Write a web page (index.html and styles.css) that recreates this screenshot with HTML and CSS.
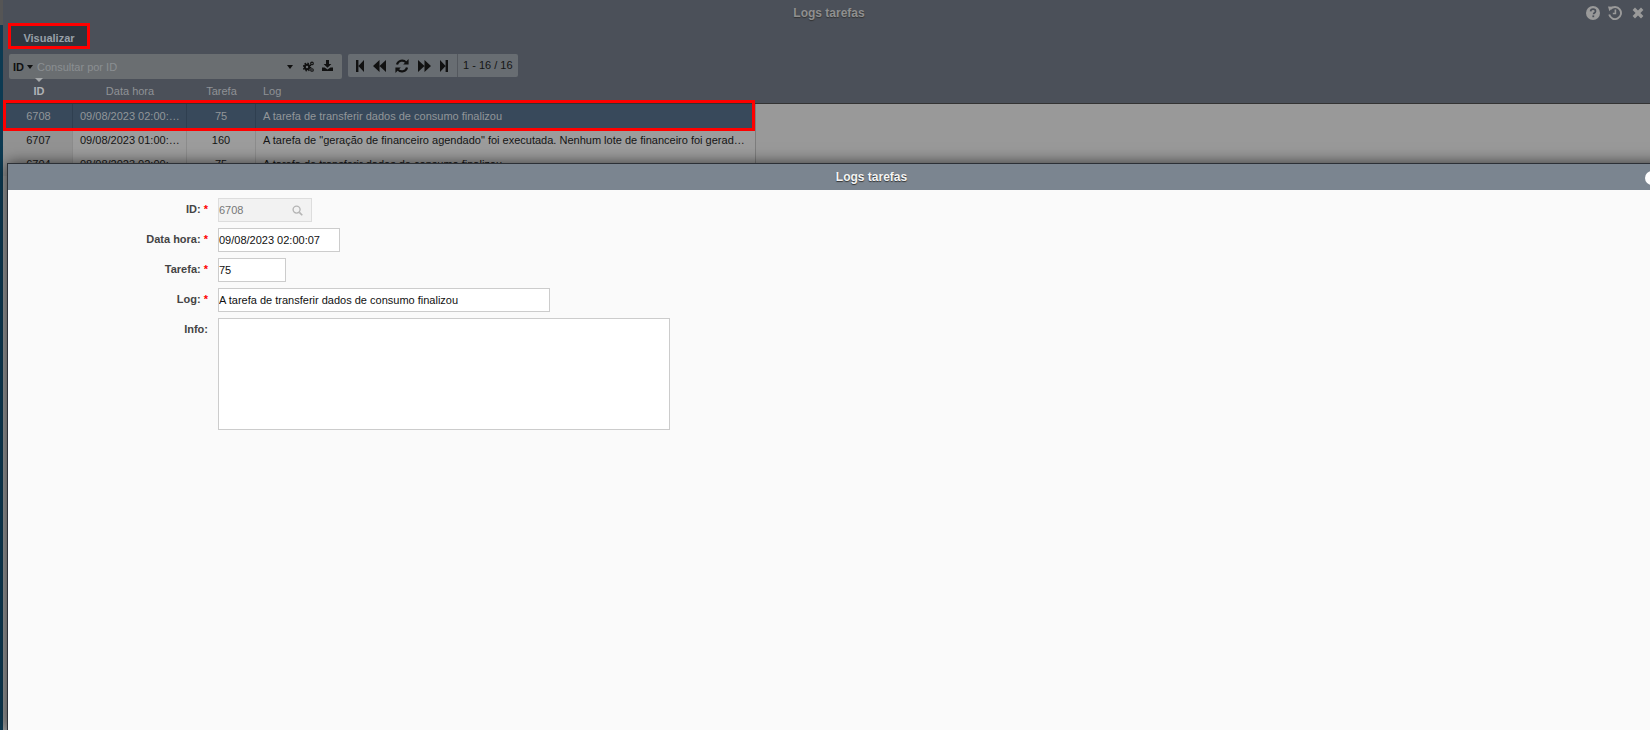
FILE: index.html
```html
<!DOCTYPE html>
<html lang="en">
<head>
<meta charset="UTF-8" />
<title>Logs tarefas</title>
<link rel="stylesheet" href="styles.css">
</head>
<body>
<div class="edge"></div>
<div class="app">
  <div class="head">
    <div class="title">Logs tarefas</div>
    <div class="win-icons">
      <svg class="win-icon" viewBox="0 0 14 14"><circle cx="7" cy="7" r="7" fill="#9a9a9a"/><path d="M4.6 5.4C4.7 3.9 5.8 3.2 7.1 3.2c1.4 0 2.4.9 2.4 2 0 1-.6 1.4-1.2 1.9-.5.3-.7.6-.7 1.2" fill="none" stroke="#4b5059" stroke-width="1.7"/><rect x="6.4" y="9.4" width="1.8" height="1.8" fill="#4b5059"/></svg>
      <svg class="win-icon" viewBox="0 0 14 14"><path d="M2.4 3.2A6 6 0 1 1 1.2 8.6" fill="none" stroke="#9a9a9a" stroke-width="1.9"/><path d="M0 .6l5 .2-3.6 4.4z" fill="#9a9a9a"/><path d="M7.4 3.6v3.9H4.8" fill="none" stroke="#9a9a9a" stroke-width="1.6"/></svg>
      <svg class="win-icon win-close" viewBox="0 0 12 12"><path d="M1.8 1.8l8.4 8.4M10.2 1.8l-8.4 8.4" stroke="#9a9a9a" stroke-width="3.4"/></svg>
    </div>
    <div class="actions"><button class="btn marked">Visualizar</button></div>
    <div class="toolbar">
      <div class="search">
        <b class="search-field">ID</b>
        <span class="caret"></span>
        <span class="search-hint">Consultar por ID</span>
        <span class="caret caret-end"></span>
        <svg class="tool-icon gears" viewBox="0 0 11 11"><circle cx="4" cy="6" r="2.2" fill="none" stroke="#111" stroke-width="2"/><circle cx="4" cy="6" r="3.7" fill="none" stroke="#111" stroke-width="1.4" stroke-dasharray="1.5 1.4"/><circle cx="9" cy="2.4" r="1.3" fill="none" stroke="#111" stroke-width="1.1"/><circle cx="9" cy="9" r="1.3" fill="none" stroke="#111" stroke-width="1.1"/></svg>
        <svg class="tool-icon save" viewBox="0 0 11 11"><path d="M4 0h3v4h2.4L5.5 7.8 1.6 4H4z" fill="#111"/><path d="M0 7.4h2.6L5.5 9.4l2.9-2H11V11H0z" fill="#111"/></svg>
      </div>
      <div class="pager">
        <div class="pager-btns">
          <svg class="step" viewBox="0 0 8 12"><path d="M0 0h2.4v12H0zM8 0v12L2.4 6z" fill="#111"/></svg>
          <svg class="fast" viewBox="0 0 13 12"><path d="M6.5 0v12L0 6zM13 0v12L6.5 6z" fill="#111"/></svg>
          <svg class="refresh" viewBox="0 0 14 14"><path d="M2 5.6A5.2 5.2 0 0 1 11 3.4M12 8.4A5.2 5.2 0 0 1 3 10.6" fill="none" stroke="#111" stroke-width="2.2"/><path d="M13.6 0v5.4H8.2zM.4 14V8.6h5.4z" fill="#111"/></svg>
          <svg class="fast" viewBox="0 0 13 12"><path d="M0 0l6.5 6L0 12zM6.5 0L13 6l-6.5 6z" fill="#111"/></svg>
          <svg class="step" viewBox="0 0 8 12"><path d="M0 0l5.6 6L0 12zM5.6 0H8v12H5.6z" fill="#111"/></svg>
        </div>
        <div class="pager-count">1 - 16 / 16</div>
      </div>
    </div>
    <div class="cols">
      <div class="col col-id col-sorted">ID<span class="sort-mark"></span></div>
      <div class="col col-date">Data hora</div>
      <div class="col col-task">Tarefa</div>
      <div class="col col-log">Log</div>
    </div>
  </div>
  <div class="grid">
    <div class="row row-active marked">
      <div class="cell col-id">6708</div>
      <div class="cell col-date">09/08/2023 02:00:07</div>
      <div class="cell col-task">75</div>
      <div class="cell col-log">A tarefa de transferir dados de consumo finalizou</div>
    </div>
    <div class="row">
      <div class="cell col-id">6707</div>
      <div class="cell col-date">09/08/2023 01:00:12</div>
      <div class="cell col-task">160</div>
      <div class="cell col-log">A tarefa de "geração de financeiro agendado" foi executada. Nenhum lote de financeiro foi gerado para o período</div>
    </div>
    <div class="row">
      <div class="cell col-id">6704</div>
      <div class="cell col-date">08/08/2023 02:00:07</div>
      <div class="cell col-task">75</div>
      <div class="cell col-log">A tarefa de transferir dados de consumo finalizou</div>
    </div>
  </div>
</div>

<div class="modal">
  <div class="modal-title">Logs tarefas</div>
  <span class="modal-close"></span>
  <form class="form">
    <div class="form-row">
      <label class="form-label">ID: <span class="req">*</span></label>
      <div class="lookup">
        <input class="lookup-input" value="6708" readonly>
        <svg class="lookup-icon" viewBox="0 0 12 12"><circle cx="5" cy="5" r="3.8" fill="none" stroke="#b5b5b5" stroke-width="1.5"/><path d="M8 8l3.2 3.2" stroke="#b5b5b5" stroke-width="1.8"/></svg>
      </div>
    </div>
    <div class="form-row">
      <label class="form-label">Data hora: <span class="req">*</span></label>
      <input class="field field-date" value="09/08/2023 02:00:07" readonly>
    </div>
    <div class="form-row">
      <label class="form-label">Tarefa: <span class="req">*</span></label>
      <input class="field field-task" value="75" readonly>
    </div>
    <div class="form-row">
      <label class="form-label">Log: <span class="req">*</span></label>
      <input class="field field-log" value="A tarefa de transferir dados de consumo finalizou" readonly>
    </div>
    <div class="form-row">
      <label class="form-label">Info:</label>
      <textarea class="field field-info" readonly></textarea>
    </div>
  </form>
</div>
</body>
</html>
```

FILE: styles.css
```css
html, body {
  height: 100%;
}
body {
  margin: 0;
  display: flex;
  overflow: hidden;
  background: #999;
  font-family: "Liberation Sans", Arial, sans-serif;
  font-size: 11px;
}
.edge {
  width: 3px;
  flex: none;
  background: linear-gradient(#555 25px, #0d3a52 25px);
}
.app {
  flex: 1;
  min-width: 0;
  display: flex;
  flex-direction: column;
}

/* top window */
.head {
  position: relative;
  height: 103px;
  background: #4b5059;
  border-bottom: 1px solid #333;
}
.title {
  height: 26px;
  line-height: 26px;
  padding-left: 5px;
  text-align: center;
  font-size: 12px;
  font-weight: 700;
  color: #8f8f8f;
  text-shadow: 0 1px 1px #333;
}
.win-icons {
  position: absolute;
  top: 6px;
  right: 6px;
  display: flex;
  align-items: center;
  gap: 8px;
}
.win-icon {
  width: 14px;
  height: 14px;
}
.win-close {
  width: 12px;
  height: 12px;
  margin-left: 2px;
}
.actions {
  height: 20px;
  padding-left: 8px;
  margin-bottom: 8px;
}
.btn {
  position: relative;
  display: block;
  width: 76px;
  height: 20px;
  padding: 3px 0 0;
  border: 0;
  background: #2f363f;
  color: #98a0a8;
  font: 700 11px "Liberation Sans", Arial, sans-serif;
}
.btn.marked::after {
  content: "";
  position: absolute;
  inset: -3px;
  border: 3px solid #f00;
}
.toolbar {
  display: flex;
  padding-left: 6px;
  gap: 6px;
}
.search {
  width: 333px;
  height: 25px;
  box-sizing: border-box;
  display: flex;
  align-items: center;
  padding-left: 4px;
  padding-right: 9px;
  background: #6a6e71;
  border-radius: 2px;
  color: #111;
}
.search-field {
  margin-right: 3px;
}
.caret {
  width: 0;
  height: 0;
  border-left: 3px solid transparent;
  border-right: 3px solid transparent;
  border-top: 4px solid #111;
}
.caret-end {
  margin-left: auto;
}
.search-hint {
  margin-left: 4px;
  color: #8a8e91;
}
.tool-icon {
  width: 11px;
  height: 11px;
}
.gears {
  margin-left: 10px;
}
.save {
  margin-left: 8px;
  margin-top: -2px;
}
.pager {
  display: flex;
  height: 23px;
  background: #686d72;
  border-radius: 2px;
  color: #151515;
}
.pager-btns {
  display: flex;
  align-items: center;
  gap: 9px;
  padding: 0 9px 0 8px;
  border-right: 1px solid #54585e;
}
.step {
  width: 8px;
  height: 12px;
}
.fast {
  width: 13px;
  height: 12px;
}
.refresh {
  width: 14px;
  height: 14px;
}
.pager-count {
  line-height: 23px;
  padding: 0 5px;
}
.cols {
  display: flex;
  height: 24px;
  line-height: 24px;
  color: #8f9296;
}
.col-sorted {
  position: relative;
  color: #b0b3b6;
  font-weight: 700;
}
.sort-mark {
  position: absolute;
  left: 32px;
  top: -1px;
  border-left: 4px solid transparent;
  border-right: 4px solid transparent;
  border-top: 4px solid #a5a8aa;
}

/* columns are shared by the head and the rows */
.col-id {
  box-sizing: border-box;
  width: 70px;
  padding-left: 2px;
  flex: none;
  text-align: center;
}
.col-date {
  box-sizing: border-box;
  width: 114px;
  flex: none;
  text-align: center;
}
.col-task {
  box-sizing: border-box;
  width: 69px;
  flex: none;
  text-align: center;
}
.col-log {
  flex: 1;
  min-width: 0;
  padding-left: 7px;
}

/* list */
.grid {
  width: 752px;
  border-right: 1px solid #7d7d7d;
}
.row {
  position: relative;
  display: flex;
  height: 24px;
  line-height: 24px;
  background: #9c9c9c;
  color: #151515;
}
.cell {
  box-sizing: border-box;
  border-right: 1px solid #8c8c8c;
  overflow: hidden;
  white-space: nowrap;
  text-overflow: ellipsis;
}
.cell.col-log {
  padding-right: 10px;
  border-right: 0;
}
.cell.col-date {
  padding: 0 6px 0 7px;
  text-align: left;
}
.row .col-id {
  background: #929292;
}
.row-active {
  z-index: 1;
  background: #38495b;
  color: #929699;
}
.row-active .col-id {
  background: #38495b;
}
.row-active .cell {
  border-right-color: #2f3f50;
}
.row.marked::after {
  content: "";
  position: absolute;
  inset: -4px 0 -3px;
  border: 3px solid #f00;
}

/* form window */
.modal {
  position: absolute;
  z-index: 2;
  left: 7px;
  top: 163px;
  width: 1728px;
  bottom: 0;
  box-sizing: border-box;
  background: #fafafa;
  border-top: 1px solid #2c3036;
  border-left: 1px solid #2c3036;
  box-shadow: 0 0 14px rgba(0, 0, 0, .65);
}
.modal-title {
  height: 26px;
  line-height: 26px;
  background: #7b8590;
  text-align: center;
  font-size: 12px;
  font-weight: 700;
  color: #f4f4f4;
  text-shadow: 0 1px 1px #333;
}
.modal-close {
  position: absolute;
  left: 1637px;
  top: 7px;
  width: 14px;
  height: 14px;
  border-radius: 50%;
  background: #fff;
}
.form {
  padding-top: 8px;
}
.form-row {
  display: flex;
  margin-bottom: 6px;
}
.form-label {
  width: 200px;
  margin-right: 10px;
  flex: none;
  text-align: right;
  line-height: 22px;
  font-weight: 700;
  color: #444;
}
.req {
  color: #f00;
}
.field {
  box-sizing: border-box;
  height: 24px;
  padding: 0;
  border: 1px solid #ccc;
  background: #fff;
  color: #111;
  font: 11px "Liberation Sans", Arial, sans-serif;
  outline: 0;
}
.field-date {
  width: 122px;
}
.field-task {
  width: 68px;
}
.field-log {
  width: 332px;
}
.field-info {
  display: block;
  width: 452px;
  height: 112px;
  resize: none;
}
.lookup {
  box-sizing: border-box;
  display: flex;
  align-items: center;
  width: 94px;
  height: 24px;
  border: 1px solid #ddd;
  background: #f2f2f2;
}
.lookup-input {
  flex: 1;
  min-width: 0;
  padding: 0;
  border: 0;
  background: transparent;
  color: #777;
  font: 11px "Liberation Sans", Arial, sans-serif;
  outline: 0;
}
.lookup-icon {
  width: 11px;
  height: 11px;
  margin-right: 8px;
}
```
